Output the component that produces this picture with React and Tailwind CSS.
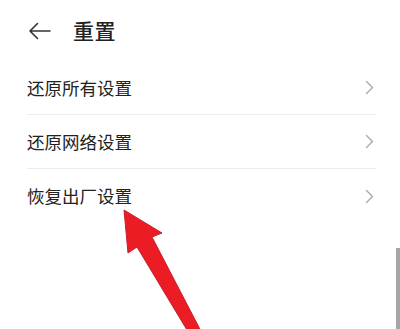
import React from 'react';

const rows = ['还原所有设置', '还原网络设置', '恢复出厂设置'];

const Chevron = () => (
  <svg width="9" height="15" viewBox="0 0 9 15" fill="none" className="shrink-0">
    <path d="M1.5 1.5 L7.5 7.5 L1.5 13.5" stroke="#a8a8a8" strokeWidth="1.4" strokeLinecap="round" strokeLinejoin="round" />
  </svg>
);

export default function App() {
  return (
    <div
      className="relative w-[400px] h-[329px] overflow-hidden bg-white text-[#222]"
      style={{ fontFamily: '"Noto Sans CJK SC", "Noto Sans", sans-serif' }}
    >
      <div className="flex items-center h-[60px] pl-[28px] pt-[1px]">
        <svg width="23" height="18" viewBox="0 0 23 18" fill="none">
          <path d="M22 9 H2 M9.5 1.5 L2 9 L9.5 16.5" stroke="#333" strokeWidth="1.6" strokeLinecap="round" strokeLinejoin="round" />
        </svg>
        <h1 className="ml-[22px] text-[21px] leading-none font-medium tracking-[0.5px]">重置</h1>
      </div>

      <div className="pl-[27px] pr-[24px] pt-[1px]">
        {rows.map((label, i) => (
          <div
            key={label}
            className={`flex items-center justify-between h-[54px] ${i < rows.length - 1 ? 'border-b border-[#ececec]' : ''}`}
          >
            <span className="text-[17.5px] leading-none">{label}</span>
            <span className="pr-[2px]"><Chevron /></span>
          </div>
        ))}
      </div>

      {/* red annotation arrow */}
      <svg className="absolute left-0 top-0 pointer-events-none" width="400" height="329" viewBox="0 0 400 329">
        <polygon
          points="124,210 162,233 152,237 203,335 190,335 137,247 128,253"
          fill="#ec1c24"
          stroke="#c2202c"
          strokeWidth="1"
          strokeLinejoin="round"
        />
      </svg>

      {/* scrollbar */}
      <div className="absolute right-0 top-[248px] w-[4px] h-[81px] bg-[#a6a6a6]" />
    </div>
  );
}
